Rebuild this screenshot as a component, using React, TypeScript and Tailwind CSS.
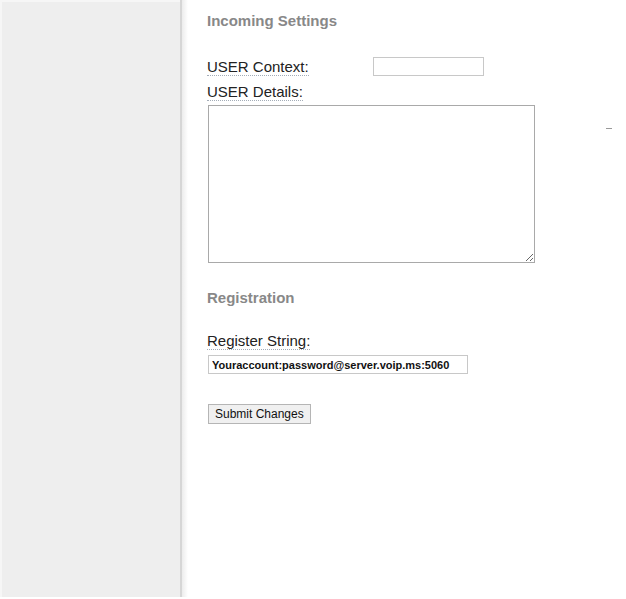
import React from 'react';

const Label: React.FC<{ children: React.ReactNode }> = ({ children }) => (
  <span className="border-b border-dotted border-[#a4adb8] text-[#222]">{children}</span>
);

export default function App() {
  return (
    <div className="flex h-[599px] w-[626px] overflow-hidden bg-white font-['Liberation_Sans',Arial,sans-serif]">
      {/* left nav column */}
      <div className="flex shrink-0">
        <div className="h-[597px] w-[180px] border-l-2 border-t-2 border-[#f6f6f6] bg-[#eeeeee]" />
        <div className="h-[597px] w-[2px] bg-[#d6d6d6]" />
        <div className="h-[597px] w-[6px] bg-gradient-to-r from-[#ececec] to-white" />
      </div>

      <div className="relative flex-1 pl-[19px] pt-[12px]">
        <h2 className="text-[15px] font-bold leading-[18px] text-[#888]">Incoming Settings</h2>

        <div className="mt-[27px] flex items-start">
          <div className="w-[166px] pt-[1px] text-[15px] leading-[18px]">
            <Label>USER Context:</Label>
          </div>
          <input className="h-[19px] w-[111px] border border-[#c8c8c8] bg-white outline-none" />
        </div>

        <div className="mt-[7px] text-[15px] leading-[18px]">
          <Label>USER Details:</Label>
        </div>

        <textarea className="ml-[1px] mt-[4px] block h-[158px] w-[327px] resize border border-[#a9a9a9] bg-white outline-none" />

        <span className="absolute left-[418px] top-[128px] h-px w-[6px] bg-[#999]" />

        <h2 className="mt-[26px] text-[15px] font-bold leading-[18px] text-[#888]">Registration</h2>

        <div className="mt-[25px] text-[15px] leading-[18px]">
          <Label>Register String:</Label>
        </div>

        <input
          defaultValue="Youraccount:password@server.voip.ms:5060"
          className="ml-[1px] mt-[5px] block h-[19px] w-[260px] border border-[#c8c8c8] bg-white px-[3px] text-[11px] font-bold text-[#111] outline-none"
        />

        <button className="ml-[1px] mt-[30px] block h-[20px] border border-[#b5b5b5] bg-[#f0f0f0] px-[6px] text-[12px] leading-[16px] text-[#111]">
          Submit Changes
        </button>
      </div>
    </div>
  );
}
